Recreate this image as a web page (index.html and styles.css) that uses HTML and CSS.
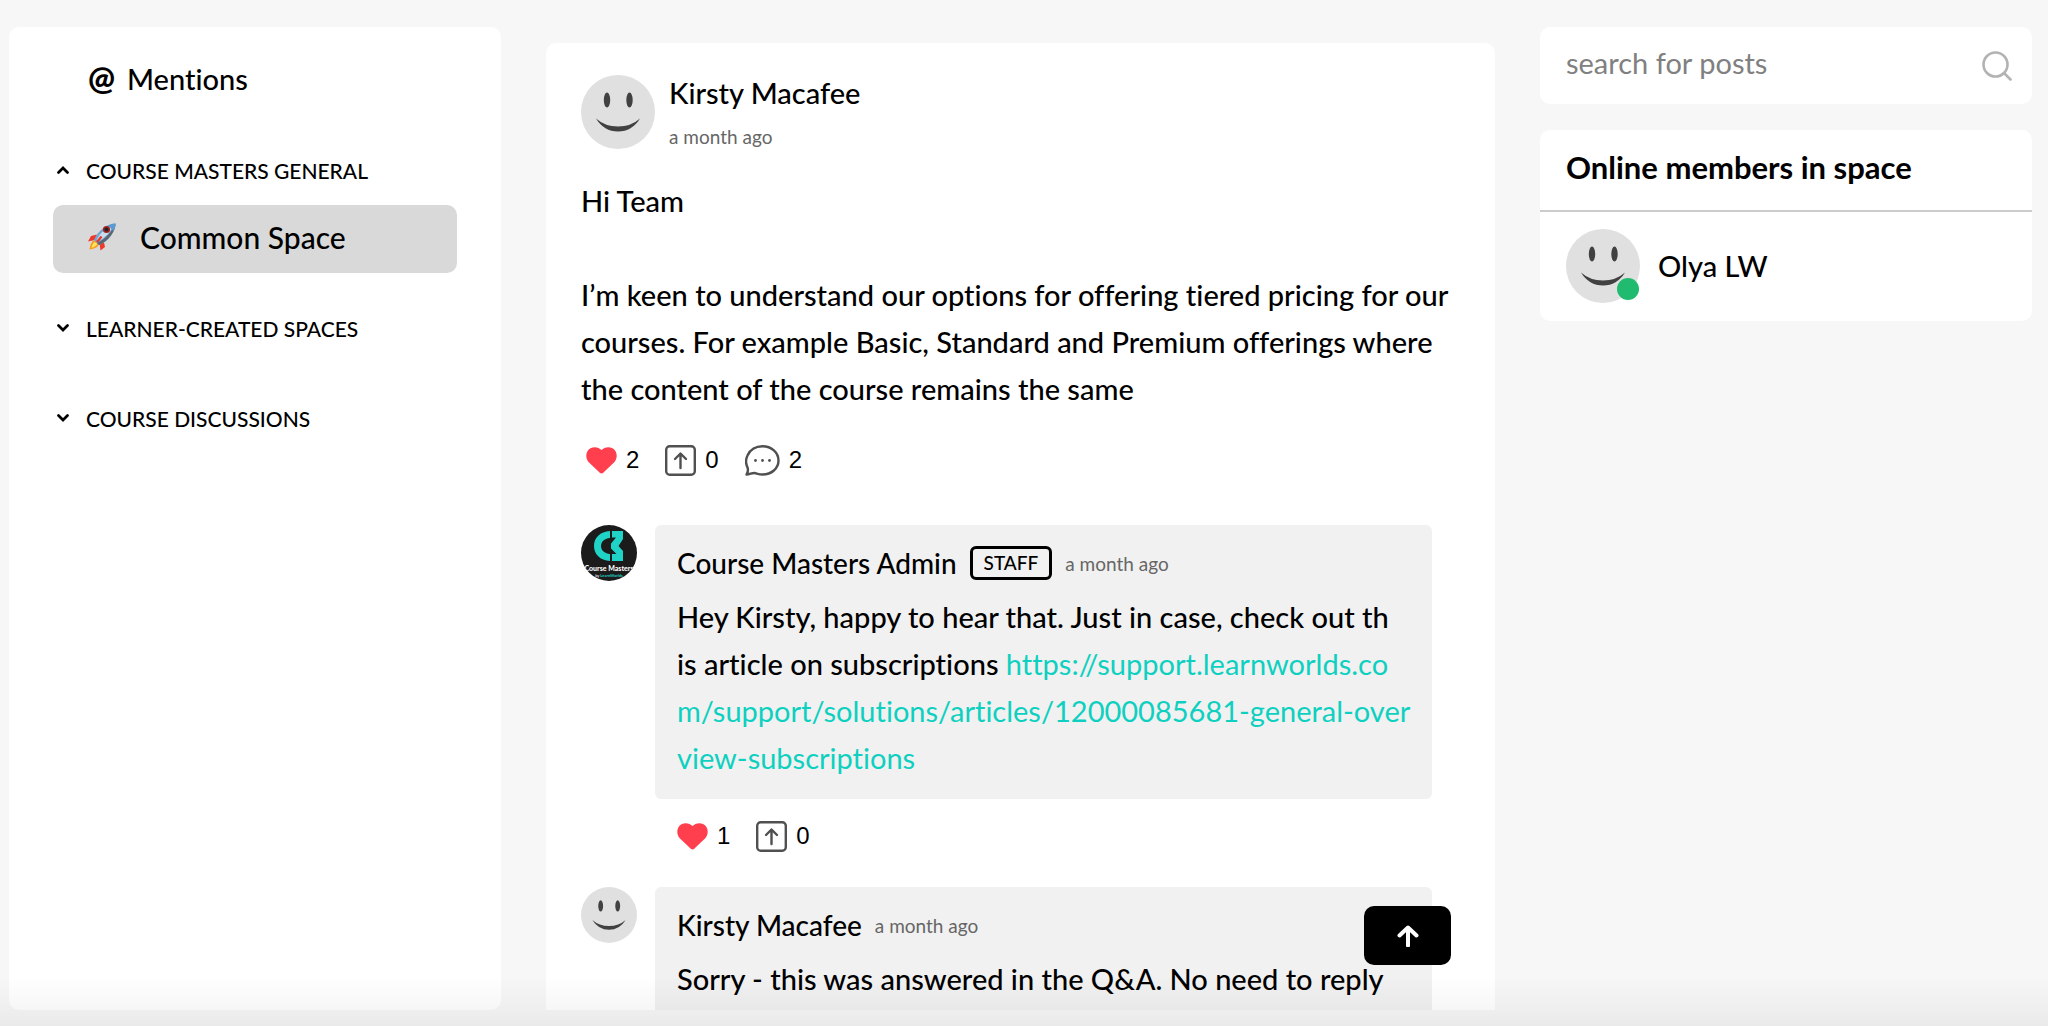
FILE: index.html
```html
<!DOCTYPE html>
<html lang="en">
<head>
    <meta charset="UTF-8">
    <meta name="viewport" content="width=device-width, initial-scale=1.0">
    <title>Common Space</title>
    <link rel="stylesheet" href="styles.css">
</head>
<body>

    <!-- shared icons -->
    <svg class="sprite" aria-hidden="true">
        <symbol id="smiley" viewBox="0 0 74 74">
            <circle cx="37" cy="37" r="37" fill="#e0e0e0"/>
            <ellipse cx="26" cy="25" rx="3.200" ry="7.500" fill="#414141"/>
            <ellipse cx="48.500" cy="25" rx="3.200" ry="7.500" fill="#414141"/>
            <path d="M15 43.500Q24 51.500 37 51.500T59 43.500Q51 56.500 37 56.500T15 43.500Z" fill="#414141"/>
        </symbol>
        <symbol id="heart" viewBox="0 0 31 27">
            <path d="M15.500 26.500C14.500 26.500 13.500 25.500 12.500 24.500L3 15.500C-1.500 10.500 0 3.500 4.500 1.300C8.500-.8 13 .5 15.500 3C18 .5 22.500-.8 26.500 1.300C31 3.500 32.500 10.500 28 15.500L18.500 24.500C17.500 25.500 16.500 26.500 15.500 26.500Z" fill="#ff3f4e"/>
        </symbol>
        <symbol id="upvote" viewBox="0 0 31 31">
            <g fill="none" stroke="#505050" stroke-width="2.400" stroke-linecap="round" stroke-linejoin="round">
                <rect x="1.200" y="1.200" width="28.600" height="28.600" rx="3.500"/>
                <path d="M15.500 23V9M10 14L15.500 8.500L21 14"/>
            </g>
        </symbol>
        <symbol id="comment" viewBox="0 0 35 31">
            <path d="M1.500 29.500C3 27 3.500 25 2.500 22.500C.8 19 .8 14 2.500 10.500C5 4.500 11 1.200 17.500 1.200C26.500 1.200 33.500 7.500 33.500 15.500S26.500 29.500 17.500 29.500C14 29.500 12 28.500 9.500 28C7 27.800 4.500 29.500 1.500 29.500Z" fill="none" stroke="#505050" stroke-width="2.400" stroke-linejoin="round"/>
            <g fill="#505050">
                <circle cx="10.500" cy="15.500" r="1.400"/>
                <circle cx="17.500" cy="15.500" r="1.400"/>
                <circle cx="24.500" cy="15.500" r="1.400"/>
            </g>
        </symbol>
        <symbol id="chevron" viewBox="0 0 12 8">
            <path d="M1.500 1.500L6 6L10.500 1.500" fill="none" stroke="#000" stroke-width="2.700" stroke-linecap="round"/>
        </symbol>
    </svg>

    <div class="page">

        <nav class="sidebar card">
            <a class="mentions" href="#"><span class="at">@</span>Mentions</a>

            <button class="group" type="button" aria-expanded="true">
                <svg class="chevron open"><use href="#chevron"/></svg>COURSE MASTERS GENERAL
            </button>
            <a class="space" href="#">
                <svg class="rocket" viewBox="0 0 28 28">
                    <path d="M9 11.500L3 13L0 18.500L7 17Z" fill="#f0382a"/>
                    <path d="M16 19.500L17 24L12.500 27.500L11.500 20Z" fill="#f0382a"/>
                    <path d="M6 17C3 19 2 23 1.500 26.500C5 26 9 25 11 21.500Z" fill="#fb9a1c"/>
                    <path d="M6.500 19C4.500 20.500 4 23 3.500 25C6 24.300 8 23 9.500 21Z" fill="#ffe45c"/>
                    <path d="M27.500.5C20 .5 10 7 6 17L11 22C21 18 27.500 8 27.500.5Z" fill="#6fa3d2"/>
                    <path d="M27.500.5C25 7 17 17 9 20L11 22C21 18 27.500 8 27.500.5Z" fill="#5a6773"/>
                    <path d="M25 2.500C18 4.500 12 10 8.500 17L10 18.500C17 15 23 9 25 2.500Z" fill="#c9dcec"/>
                    <path d="M27.500.5C25 .5 22.500 1.200 20 2.500L25.500 8C26.800 5.500 27.500 3 27.500.5Z" fill="#5b9bd0"/>
                    <circle cx="18.500" cy="6.500" r="3.600" fill="#a8201a"/>
                    <circle cx="18.500" cy="6.500" r="2" fill="#1d2430"/>
                    <path d="M13.500 13.500L9 19" stroke="#e8382a" stroke-width="2.400"/>
                </svg>
                Common Space
            </a>

            <button class="group" type="button" aria-expanded="false">
                <svg class="chevron"><use href="#chevron"/></svg>LEARNER-CREATED SPACES
            </button>
            <button class="group" type="button" aria-expanded="false">
                <svg class="chevron"><use href="#chevron"/></svg>COURSE DISCUSSIONS
            </button>
        </nav>

        <main class="feed card">
            <article>
                <header class="post-header">
                    <svg class="avatar"><use href="#smiley"/></svg>
                    <div>
                        <h2 class="name">Kirsty Macafee</h2>
                        <time class="time">a month ago</time>
                    </div>
                </header>

                <div class="text">
                    <p>Hi Team</p>
                    <p>I’m keen to understand our options for offering tiered pricing for our courses. For example Basic, Standard and Premium offerings where the content of the course remains the same</p>
                </div>

                <div class="actions">
                    <button type="button" aria-label="Like"><svg class="heart"><use href="#heart"/></svg>2</button>
                    <button type="button" aria-label="Upvote"><svg class="upvote"><use href="#upvote"/></svg>0</button>
                    <button type="button" aria-label="Comments"><svg class="comment"><use href="#comment"/></svg>2</button>
                </div>

                <section class="reply">
                    <svg class="avatar small" viewBox="0 0 56 56">
                        <clipPath id="round"><circle cx="28" cy="28" r="28"/></clipPath>
                        <g clip-path="url(#round)">
                            <rect width="56" height="56" fill="#1b1b1b"/>
                            <path d="M29 6V13C23 13.500 20 17 20 21S23 28.500 29 29V36C19 35.500 13 29 13 21S19 6.500 29 6Z" fill="#1fd3c6"/>
                            <path d="M31 6H42V14L37.500 21L42 26V36H31V29H35.500L30 23.500V18.500L35 12.500H31Z" fill="#1fd3c6"/>
                            <text class="logo-name" x="28" y="46" text-anchor="middle">Course Masters</text>
                            <text class="logo-by" x="28" y="52" text-anchor="middle">by <tspan class="brand">LearnWorlds</tspan></text>
                        </g>
                    </svg>
                    <div class="reply-main">
                        <div class="bubble">
                            <div class="reply-header">
                                <h3 class="name">Course Masters Admin</h3>
                                <span class="badge">STAFF</span>
                                <time class="time">a month ago</time>
                            </div>
                            <p class="text">Hey Kirsty, happy to hear that. Just in case, check out th<br>is article on subscriptions <a href="#">https://support.learnworlds.co<br>m/support/solutions/articles/12000085681-general-over<br>view-subscriptions</a></p>
                        </div>
                        <div class="actions">
                            <button type="button" aria-label="Like"><svg class="heart"><use href="#heart"/></svg>1</button>
                            <button type="button" aria-label="Upvote"><svg class="upvote"><use href="#upvote"/></svg>0</button>
                        </div>
                    </div>
                </section>

                <section class="reply">
                    <svg class="avatar small"><use href="#smiley"/></svg>
                    <div class="reply-main">
                        <div class="bubble">
                            <div class="reply-header">
                                <h3 class="name">Kirsty Macafee</h3>
                                <time class="time">a month ago</time>
                            </div>
                            <p class="text">Sorry - this was answered in the Q&amp;A. No need to reply</p>
                        </div>
                    </div>
                </section>
            </article>

            <button class="to-top" type="button" aria-label="Back to top">
                <svg viewBox="0 0 22 22"><path d="M11 20.500V3M2.500 10.500L11 2.500L19.500 10.500" fill="none" stroke="#fff" stroke-width="4" stroke-linecap="round" stroke-linejoin="round"/></svg>
            </button>
        </main>

        <aside class="right">
            <form class="search card">
                <input type="search" placeholder="search for posts" aria-label="search for posts">
                <button type="button" aria-label="Search">
                    <svg viewBox="0 0 30 30"><g fill="none" stroke="#b3b3b3" stroke-width="2.600" stroke-linecap="round"><circle cx="13.500" cy="13.500" r="12"/><path d="M22 22L28.500 28.500"/></g></svg>
                </button>
            </form>

            <section class="members card">
                <h2>Online members in space</h2>
                <a class="member" href="#">
                    <span class="presence"><svg class="avatar"><use href="#smiley"/></svg></span>
                    Olya LW
                </a>
            </section>
        </aside>

    </div>

    <div class="fade"></div>

</body>
</html>
```
FILE: styles.css
```css
* {
    margin: 0;
    padding: 0;
    box-sizing: border-box;
}

body {
    font-family: Lato, 'Liberation Sans', sans-serif;
    font-size: 29px;
    font-weight: 500;
    font-variant-ligatures: none;
    background-color: #f7f7f7;
    color: #000;
    overflow: hidden;
}

a {
    color: inherit;
    text-decoration: none;
}

button {
    font: inherit;
    color: inherit;
    background: none;
    border: 0;
    cursor: pointer;
}

svg {
    display: block;
    flex-shrink: 0;
}

.sprite {
    position: absolute;
    width: 0;
    height: 0;
}

.page {
    display: grid;
    grid-template-columns: 492fr 949fr 492fr;
    gap: 45px;
    height: 100vh;
    padding: 27px 16px 16px 9px;
}

.card {
    background-color: #fff;
    border-radius: 10px;
}

/* left menu */
.sidebar {
    padding: 29px 44px;
}

.mentions {
    display: flex;
    align-items: center;
    gap: 11px;
    height: 44px;
    padding-left: 35px;
    margin-bottom: 48px;
}

.at {
    width: 28px;
    font-size: 32px;
    font-weight: 900;
    line-height: 28px;
}

.group {
    display: flex;
    align-items: center;
    gap: 17px;
    width: 100%;
    height: 44px;
    padding-left: 4px;
    margin-bottom: 46px;
    font-size: 21px;
}

.chevron {
    width: 12px;
    height: 8px;
}

.chevron.open {
    transform: rotate(180deg);
}

.space {
    display: flex;
    align-items: center;
    gap: 24px;
    height: 68px;
    padding: 0 35px 5px;
    margin: -33px 0 33px;
    font-size: 30px;
    background-color: #d9d9d9;
    border-radius: 10px;
}

.rocket {
    width: 28px;
    height: 28px;
}

/* posts */
.feed {
    position: relative;
    margin-top: 16px;
    padding: 32px 35px 0;
    border-radius: 10px 10px 0 0;
    overflow: hidden;
}

.post-header {
    display: flex;
    gap: 14px;
    margin-bottom: 28px;
}

.avatar {
    width: 74px;
    height: 74px;
}

.avatar.small {
    width: 56px;
    height: 56px;
}

.name {
    font-size: 29px;
    font-weight: 500;
    line-height: 35px;
}

.time {
    font-size: 19px;
    font-weight: 400;
    color: #666;
}

.post-header .time {
    display: block;
    margin-top: 15px;
    line-height: 24px;
}

.text {
    line-height: 47px;
}

.text p + p {
    margin-top: 47px;
}

.actions {
    display: flex;
    gap: 26px;
    padding: 32px 5px 49px;
    font: 24px/32px 'Liberation Sans', sans-serif;
}

.actions button {
    display: flex;
    align-items: center;
    gap: 9px;
    height: 32px;
}

.heart {
    width: 31px;
    height: 27px;
}

.upvote {
    width: 31px;
    height: 31px;
}

.comment {
    width: 35px;
    height: 31px;
}

.reply {
    display: flex;
    gap: 18px;
    padding-right: 28px;
}

.reply-main {
    flex: 1;
}

.bubble {
    padding: 20px 22px 18px;
    background-color: #f1f1f1;
    border-radius: 6px;
}

.reply-header {
    display: flex;
    align-items: center;
    gap: 13px;
    height: 36px;
    margin-bottom: 12px;
}

.reply .name {
    font-size: 28px;
}

.bubble .text {
    white-space: nowrap;
}

.bubble .text a {
    font-weight: 400;
    color: #0ed0c0;
}

.reply .actions {
    padding: 21px 22px 35px;
}

.badge {
    padding: 0 11px;
    border: 3px solid #000;
    border-radius: 6px;
    font-size: 19px;
    line-height: 28px;
}

.logo-name {
    font-size: 7px;
    font-weight: 900;
    fill: #fff;
}

.logo-by {
    font-size: 4px;
    font-weight: 700;
    fill: #ddd;
}

.brand {
    fill: #1fd3c6;
}

.to-top {
    position: absolute;
    right: 44px;
    bottom: 45px;
    display: flex;
    align-items: center;
    justify-content: center;
    width: 87px;
    height: 59px;
    background-color: #000;
    border-radius: 10px;
}

.to-top svg {
    width: 22px;
    height: 22px;
}

/* right column */
.search {
    display: flex;
    align-items: center;
    height: 77px;
    padding: 0 20px 0 26px;
    margin-bottom: 26px;
}

.search input {
    flex: 1;
    min-width: 0;
    height: 100%;
    padding-bottom: 6px;
    border: 0;
    outline: 0;
    background: none;
    font: inherit;
    font-weight: 400;
}

.search input::placeholder {
    color: #808080;
}

.search svg {
    width: 30px;
    height: 30px;
}

.members h2 {
    padding: 17px 26px 23px;
    border-bottom: 2px solid #ccc;
    font-size: 31px;
    font-weight: 700;
    line-height: 40px;
}

.member {
    display: flex;
    align-items: center;
    gap: 18px;
    padding: 17px 26px 18px;
    line-height: 36px;
}

.presence {
    position: relative;
}

.presence::after {
    content: '';
    position: absolute;
    right: 1px;
    bottom: 3px;
    width: 22px;
    height: 22px;
    border-radius: 50%;
    background-color: #20bb6e;
}

/* soft shade along the bottom of the window */
.fade {
    position: fixed;
    left: 0;
    right: 0;
    bottom: 0;
    height: 50px;
    background: linear-gradient(rgba(0, 0, 0, 0), rgba(0, 0, 0, 0.05));
    pointer-events: none;
}
```
